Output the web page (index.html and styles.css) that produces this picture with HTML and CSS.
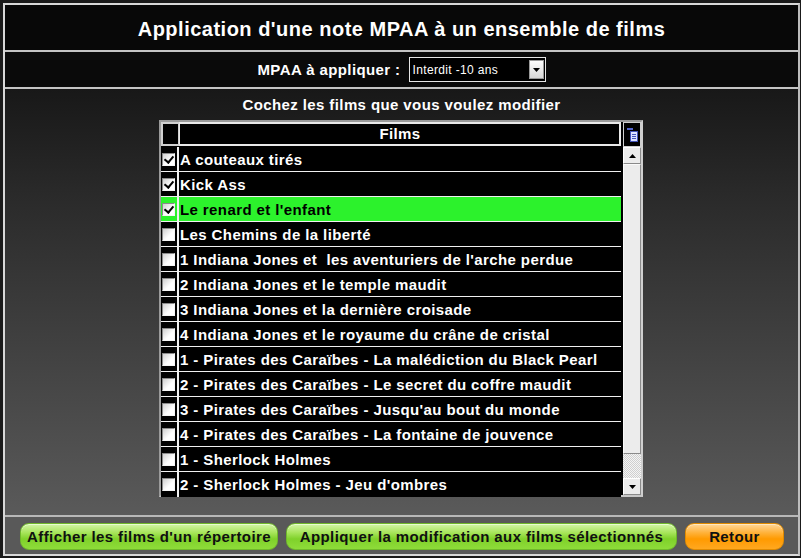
FILE: index.html
```html
<!DOCTYPE html>
<html lang="fr">
<head>
<meta charset="utf-8">
<link rel="stylesheet" href="styles.css">
</head>
<body>
<div class="window">
  <header class="title">Application d'une note MPAA à un ensemble de films</header>
  <div class="mpaa-row">
    <span class="mpaa-label">MPAA à appliquer :</span>
    <div class="select">
      <span class="select-text">Interdit -10 ans</span>
      <span class="select-btn"><svg width="7" height="4" viewBox="0 0 7 4"><path d="M0 0h7L3.5 4z" fill="#000"/></svg></span>
    </div>
  </div>
  <main class="main">
    <div class="instructions">Cochez les films que vous voulez modifier</div>
    <div class="grid">
      <div class="grid-body">
        <div class="row head">
          <div class="cb-cell"></div>
          <div class="txt-cell center">Films</div>
        </div>
        <div class="row"><div class="cb-cell"><span class="cb checked"></span></div><div class="txt-cell">A couteaux tirés</div></div>
        <div class="row"><div class="cb-cell"><span class="cb checked"></span></div><div class="txt-cell">Kick Ass</div></div>
        <div class="row sel"><div class="cb-cell"><span class="cb checked"></span></div><div class="txt-cell">Le renard et l'enfant</div></div>
        <div class="row"><div class="cb-cell"><span class="cb"></span></div><div class="txt-cell">Les Chemins de la liberté</div></div>
        <div class="row"><div class="cb-cell"><span class="cb"></span></div><div class="txt-cell">1 Indiana Jones et &nbsp;les aventuriers de l'arche perdue</div></div>
        <div class="row"><div class="cb-cell"><span class="cb"></span></div><div class="txt-cell">2 Indiana Jones et le temple maudit</div></div>
        <div class="row"><div class="cb-cell"><span class="cb"></span></div><div class="txt-cell">3 Indiana Jones et la dernière croisade</div></div>
        <div class="row"><div class="cb-cell"><span class="cb"></span></div><div class="txt-cell">4 Indiana Jones et le royaume du crâne de cristal</div></div>
        <div class="row"><div class="cb-cell"><span class="cb"></span></div><div class="txt-cell">1 - Pirates des Caraïbes - La malédiction du Black Pearl</div></div>
        <div class="row"><div class="cb-cell"><span class="cb"></span></div><div class="txt-cell">2 - Pirates des Caraïbes - Le secret du coffre maudit</div></div>
        <div class="row"><div class="cb-cell"><span class="cb"></span></div><div class="txt-cell">3 - Pirates des Caraïbes - Jusqu'au bout du monde</div></div>
        <div class="row"><div class="cb-cell"><span class="cb"></span></div><div class="txt-cell">4 - Pirates des Caraïbes - La fontaine de jouvence</div></div>
        <div class="row"><div class="cb-cell"><span class="cb"></span></div><div class="txt-cell">1 - Sherlock Holmes</div></div>
        <div class="row last"><div class="cb-cell"><span class="cb"></span></div><div class="txt-cell">2 - Sherlock Holmes - Jeu d'ombres</div></div>
      </div>
      <div class="scroll-col">
        <div class="scroll-head">
          <svg width="11" height="14" viewBox="0 0 11 14"><rect x="0" y="0" width="6" height="2" fill="#5566cc"/><rect x="3.5" y="3.5" width="7" height="10" fill="#dde3ff" stroke="#4455bb" stroke-width="1"/><path d="M5 6.5h4M5 8.5h4M5 10.5h4" stroke="#4455bb" stroke-width="1"/></svg>
        </div>
        <div class="scrollbar">
          <div class="sb-btn"><svg width="7" height="4" viewBox="0 0 7 4"><path d="M0 4h7L3.5 0z" fill="#000"/></svg></div>
          <div class="sb-thumb"></div>
          <div class="sb-track"></div>
          <div class="sb-btn"><svg width="7" height="4" viewBox="0 0 7 4"><path d="M0 0h7L3.5 4z" fill="#000"/></svg></div>
        </div>
      </div>
    </div>
  </main>
  <footer class="buttons">
    <button class="btn green w1">Afficher les films d'un répertoire</button>
    <button class="btn green w2">Appliquer la modification aux films sélectionnés</button>
    <button class="btn orange w3">Retour</button>
  </footer>
</div>
</body>
</html>
```
FILE: styles.css
```css
* { box-sizing: border-box; }
html, body { margin: 0; padding: 0; }
body {
  width: 801px;
  height: 558px;
  background: #1a1a1a;
  font-family: "Liberation Sans", Arial, sans-serif;
  padding: 3px 1px 2px 3px;
  overflow: hidden;
}
.window {
  width: 797px;
  height: 553px;
  border: 2px solid #d8d8d8;
  border-right-color: #bdbdbd;
  display: flex;
  flex-direction: column;
  background: #080808;
}
.title {
  height: 47px;
  flex: none;
  background: #080808;
  color: #fff;
  font-weight: bold;
  font-size: 20px;
  letter-spacing: 0.5px;
  text-align: center;
  line-height: 48px;
  border-bottom: 2px solid #c4c4c4;
}
.mpaa-row {
  height: 37px;
  flex: none;
  display: flex;
  align-items: center;
  justify-content: center;
  gap: 8px;
  background: #0a0a0a;
  border-bottom: 2px solid #c4c4c4;
}
.mpaa-label {
  color: #fff;
  font-weight: bold;
  font-size: 15px;
  letter-spacing: 0.4px;
}
.select {
  width: 137px;
  height: 25px;
  border: 1px solid #e6e6e6;
  background: #000;
  display: flex;
  align-items: center;
  padding: 0 1px 0 3px;
}
.select-text {
  flex: 1;
  color: #fff;
  font-size: 12px;
  letter-spacing: 0.35px;
}
.select-btn {
  width: 15px;
  height: 19px;
  background: linear-gradient(#fdfdfd, #d8d8d8);
  border: 1px solid #9a9a9a;
  display: flex;
  align-items: center;
  justify-content: center;
}
.main {
  flex: 1;
  background: linear-gradient(#181818 0%, #2a2a2a 25%, #4a4a4a 75%, #5a5a5a 100%);
  border-bottom: 2px solid #b8b8b8;
  display: flex;
  flex-direction: column;
  align-items: center;
  padding-top: 4px;
}
.instructions {
  color: #fff;
  font-weight: bold;
  font-size: 15px;
  letter-spacing: 0.4px;
  height: 27px;
  line-height: 24px;
  padding-left: 0;
}
.grid {
  width: 484px;
  height: 377px;
  margin-left: -1px;
  border: 2px solid #9a9a9a;
  border-right-color: #cfcfcf;
  border-bottom-color: #c8c8c8;
  display: flex;
  background: #000;
}
.grid-body {
  width: 460px;
  display: flex;
  flex-direction: column;
}
.row {
  height: 25px;
  display: flex;
  border-bottom: 1px solid #f0f0f0;
  color: #fff;
  background: #000;
}
.row.last { border-bottom: none; }
.row.head { height: 25px; border-bottom: 1px solid #000; }
.row.head .cb-cell { border: 2px solid #cfcfcf; border-right-width: 1px; }
.row.head .txt-cell { border: 2px solid #e8e8e8; border-left-width: 1px; }
.row.sel { background: #2cf22c; color: #000; }
.cb-cell {
  width: 18px;
  flex: none;
  border-right: 2px solid #f0f0f0;
  display: flex;
  align-items: center;
  justify-content: flex-start;
  padding-left: 1px;
}
.txt-cell {
  flex: 1;
  font-weight: bold;
  font-size: 15px;
  letter-spacing: 0.4px;
  line-height: 25px;
  padding-left: 1px;
  white-space: nowrap;
  overflow: hidden;
}
.txt-cell.center { text-align: center; line-height: 20px; }
.cb {
  width: 13px;
  height: 13px;
  background: linear-gradient(135deg, #d0d0d0, #ffffff 60%);
  border: 1px solid #8a8a8a;
  border-right-color: #f4f4f4;
  border-bottom-color: #f4f4f4;
  position: relative;
}
.cb.checked::after {
  content: "";
  position: absolute;
  left: 3px;
  top: 0px;
  width: 4px;
  height: 7px;
  border: solid #000;
  border-width: 0 2px 2px 0;
  transform: rotate(40deg);
}
.scroll-col {
  width: 18px;
  margin-left: 2px;
  display: flex;
  flex-direction: column;
}
.scroll-head {
  height: 25px;
  border: 1px solid #cfcfcf;
  display: flex;
  align-items: center;
  justify-content: center;
  background: #000;
}
.scrollbar {
  flex: 1;
  display: flex;
  flex-direction: column;
  background: #f0f0f0;
}
.sb-btn {
  height: 17px;
  flex: none;
  background: #ececec;
  border: 1px solid #fff;
  border-right-color: #8a8a8a;
  border-bottom-color: #8a8a8a;
  display: flex;
  align-items: center;
  justify-content: center;
}
.sb-thumb {
  height: 290px;
  flex: none;
  background: #ececec;
  border: 1px solid #fafafa;
  border-right-color: #8a8a8a;
  border-bottom-color: #8a8a8a;
}
.sb-track {
  flex: 1;
  background-color: #f4f4f4;
  background-image: repeating-conic-gradient(#cfcfcf 0% 25%, #f4f4f4 0% 50%);
  background-size: 2px 2px;
}
.buttons {
  height: 37px;
  flex: none;
  background: #595959;
  display: flex;
  align-items: center;
  gap: 8px;
  padding-left: 15px;
  padding-top: 1px;
}
.btn {
  height: 27px;
  border-radius: 9px;
  font-family: "Liberation Sans", Arial, sans-serif;
  font-weight: bold;
  font-size: 15px;
  letter-spacing: 0.4px;
  color: #101010;
  padding: 0;
  cursor: pointer;
}
.btn.green {
  border: 1px solid #6fb82a;
  background: linear-gradient(#d4f5a8 0%, #a7e55a 35%, #7fd12a 60%, #8edc3a 100%);
  box-shadow: inset 0 1px 0 #e8ffd0;
}
.btn.orange {
  border: 1px solid #e08a00;
  background: linear-gradient(#ffd79a 0%, #ffb23a 35%, #ff9a00 60%, #ffa820 100%);
  box-shadow: inset 0 1px 0 #ffe8c0;
}
.w1 { width: 258px; }
.w2 { width: 391px; }
.w3 { width: 99px; }
```
